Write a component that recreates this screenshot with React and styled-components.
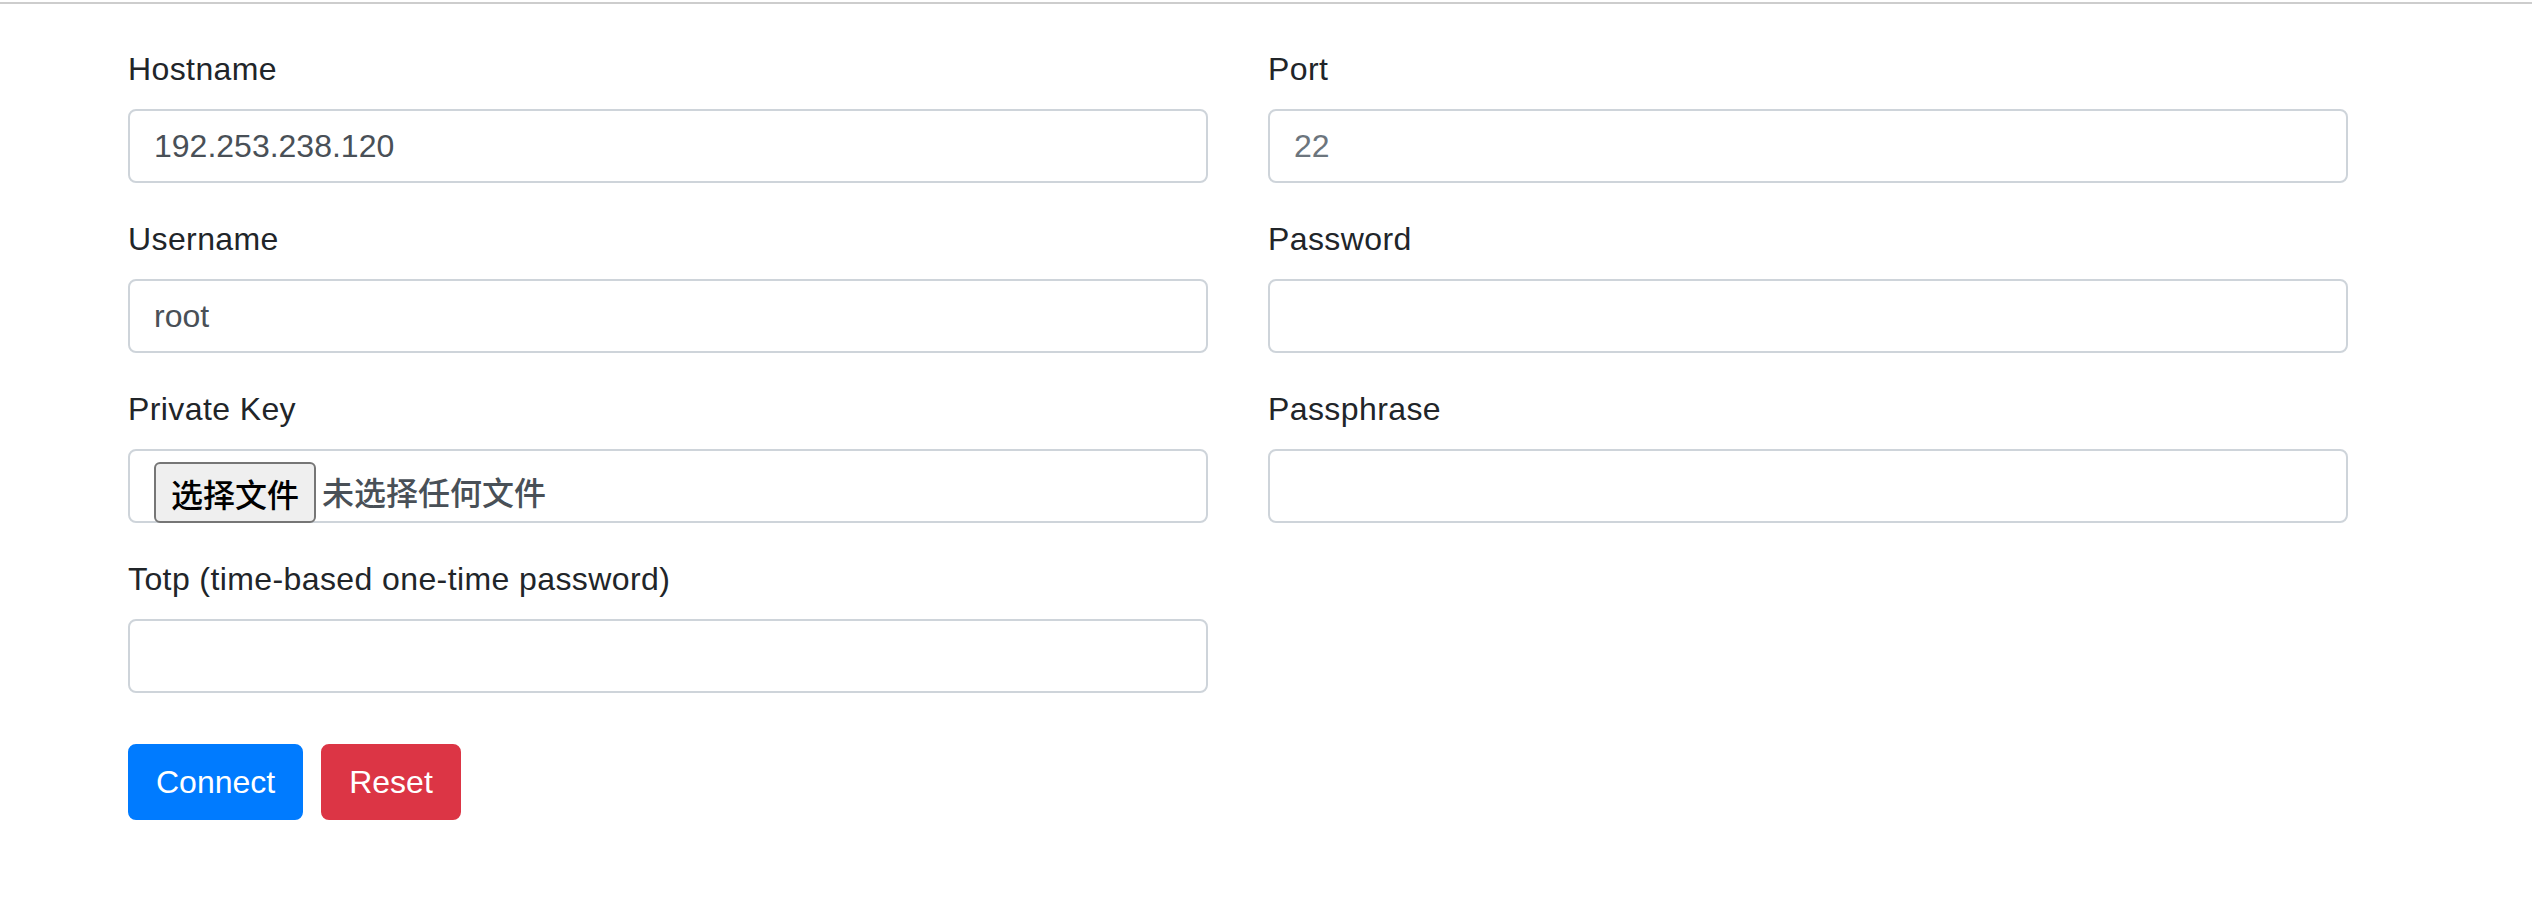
import React from 'react'
import styled, { createGlobalStyle } from 'styled-components'

const Global = createGlobalStyle`
body {
  margin: 0;
  background: #fff;
  font-family: "Liberation Sans", Arial, "Noto Sans CJK SC", sans-serif;
  color: #212529;
}
`

const Rule = styled.div`
margin-top: 2px;
height: 2px;
background: #cdcdcd;
`

const Page = styled.div`
padding: 41px 0 60px 128px;
`

const Grid = styled.div`
display: grid;
grid-template-columns: 1080px 1080px;
column-gap: 60px;
`

const Group = styled.div`
display: flex;
flex-direction: column;
margin-bottom: 32px;
`

const Label = styled.label`
font-size: 32px;
line-height: 48px;
letter-spacing: 0.4px;
margin-bottom: 16px;
color: #212529;
`

const Input = styled.div`
box-sizing: border-box;
height: 74px;
border: 2px solid #ced4da;
border-radius: 8px;
padding: 0 24px;
display: flex;
align-items: center;
font-size: 32px;
color: ${p => (p.placeholder ? '#6c757d' : '#495057')};
`

const FileBox = styled.div`
box-sizing: border-box;
height: 74px;
border: 2px solid #ced4da;
border-radius: 8px;
padding: 11px 24px 0;
display: flex;
align-items: flex-start;
gap: 6px;
font-family: "Noto Sans CJK SC", "Liberation Sans", sans-serif;
font-weight: 500;
font-size: 32px;
`

const FileButton = styled.div`
box-sizing: border-box;
height: 61px;
padding: 0 15px;
display: flex;
align-items: center;
background: #efefef;
border: 2px solid #767676;
border-radius: 6px;
color: #000;
line-height: 1;
`

const FileName = styled.span`
color: #495057;
line-height: 58px;
`

const Actions = styled.div`
display: flex;
gap: 18px;
margin-top: 19px;
`

const Button = styled.button`
box-sizing: border-box;
height: 76px;
padding: 0 26px;
border: 2px solid ${p => p.color};
background: ${p => p.color};
color: #fff;
border-radius: 8px;
font-family: "Liberation Sans", Arial, sans-serif;
font-size: 32px;
`

const Field = ({ label, value, placeholder }) => (
  <Group>
    <Label>{label}</Label>
    <Input placeholder={placeholder ? 1 : undefined}>{value || placeholder}</Input>
  </Group>
)

export default function App() {
  return (
    <>
      <Global />
      <Rule />
      <Page>
        <Grid>
          <Field label="Hostname" value="192.253.238.120" />
          <Field label="Port" placeholder="22" />
          <Field label="Username" value="root" />
          <Field label="Password" />
          <Group>
            <Label>Private Key</Label>
            <FileBox>
              <FileButton>选择文件</FileButton>
              <FileName>未选择任何文件</FileName>
            </FileBox>
          </Group>
          <Field label="Passphrase" />
          <Field label="Totp (time-based one-time password)" />
        </Grid>
        <Actions>
          <Button color="#007bff">Connect</Button>
          <Button color="#dc3545">Reset</Button>
        </Actions>
      </Page>
    </>
  )
}
